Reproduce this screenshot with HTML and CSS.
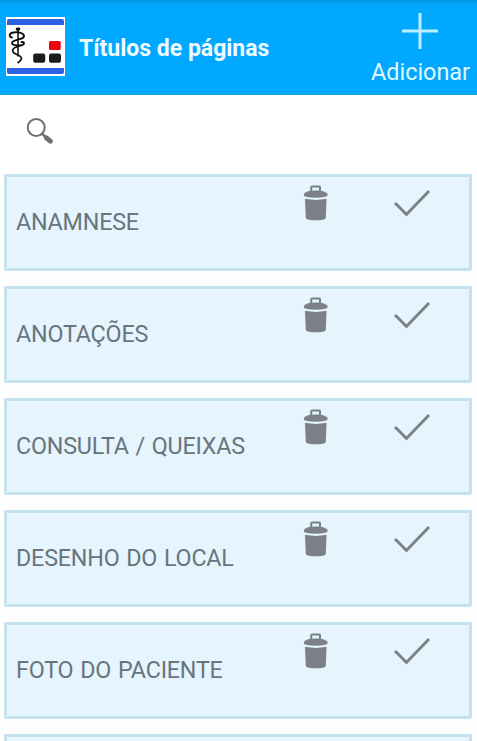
FILE: index.html
```html
<!DOCTYPE html>
<html lang="pt-BR">
<head>
<meta charset="utf-8">
<title>Títulos de páginas</title>
<link rel="stylesheet" href="styles.css">
</head>
<body>
<svg class="symbols" aria-hidden="true">
  <symbol id="trash" viewBox="0 0 26 36">
    <path d="M8.200 6V2.200Q8.200 1.500 9 1.500H16.200Q17 1.500 17 2.200V6" fill="none" stroke="currentColor" stroke-width="2"/>
    <path d="M.8 9.500C1.300 7 6 5.500 12.700 5.500S24.100 7 24.600 9.500Q25 10.900 23.500 11.400Q18 12.800 12.700 12.800T2 11.400Q.4 10.900 .8 9.500Z"/>
    <path d="M2 13.800Q12.700 16 23.500 13.800L22.800 32.500Q22.700 33.800 20.800 34.500Q12.700 36.200 4.800 34.500Q2.900 33.800 2.800 32.500Z"/>
  </symbol>
  <symbol id="check" viewBox="0 0 36 28">
    <path d="M1 13L12.500 24.500L35 1" fill="none" stroke="currentColor" stroke-width="2.900"/>
  </symbol>
</svg>
<header class="bar">
  <svg class="logo" viewBox="0 0 59 59">
    <rect width="59" height="59" fill="#fff"/>
    <path d="M1 8V4Q1 2 3 2H56Q58 2 58 4V8ZM1 51V55Q1 57 3 57H56Q58 57 58 55V51Z" fill="#2c61e6"/>
    <rect x="43" y="24" width="11.700" height="9" rx="1.500" fill="#f00009"/>
    <rect x="27.200" y="36.500" width="12" height="9.300" rx="2" fill="#1c1c1f"/>
    <rect x="43" y="36.500" width="12" height="9.300" rx="2" fill="#1c1c1f"/>
    <g fill="none" stroke="#080808" stroke-linecap="round">
      <path d="M12 12V39" stroke-width="1.500"/>
      <path d="M11.200 12H12.800" stroke-width="3"/>
      <path d="M6 20.500C2.500 20 3 16 7.500 15.500C13 14.500 18.500 16.500 18 19.500C17.500 23 6 22.500 6 26C6 29 18 29.500 18 26.500Q18 25 15.500 25" stroke-width="1.800"/>
      <path d="M15 28.500C9 30 6 31.500 6.800 34.500C7.800 38 16 37.500 15.500 41.500Q15 44 12 45.700" stroke-width="1.600"/>
    </g>
  </svg>
  <h1 class="title">Títulos de páginas</h1>
  <button class="add">
    <svg class="plus" viewBox="0 0 36 36"><path d="M18 0V36M0 18H36"/></svg>
    <span>Adicionar</span>
  </button>
</header>
<div class="search">
  <svg class="lens" viewBox="0 0 28 28">
    <circle cx="10.200" cy="9.500" r="8.500" fill="none" stroke="currentColor" stroke-width="2"/>
    <path d="M16 15.500L20 19.500" stroke="currentColor" stroke-width="2.500"/>
    <path d="M20.300 19.800L24.400 23.200" stroke="currentColor" stroke-width="5" stroke-linecap="round"/>
  </svg>
</div>
<main class="list">
  <section class="card"><span class="name">ANAMNESE</span><svg class="trash"><use href="#trash"/></svg><svg class="check"><use href="#check"/></svg></section>
  <section class="card"><span class="name">ANOTAÇÕES</span><svg class="trash"><use href="#trash"/></svg><svg class="check"><use href="#check"/></svg></section>
  <section class="card"><span class="name">CONSULTA / QUEIXAS</span><svg class="trash"><use href="#trash"/></svg><svg class="check"><use href="#check"/></svg></section>
  <section class="card"><span class="name">DESENHO DO LOCAL</span><svg class="trash"><use href="#trash"/></svg><svg class="check"><use href="#check"/></svg></section>
  <section class="card"><span class="name">FOTO DO PACIENTE</span><svg class="trash"><use href="#trash"/></svg><svg class="check"><use href="#check"/></svg></section>
  <section class="card card-cut"></section>
</main>
</body>
</html>
```
FILE: styles.css
```css
* { box-sizing: border-box; }
body {
  margin: 0;
  height: 741px;
  overflow: hidden;
  background: #fdfffe;
  font-family: Roboto, "Liberation Sans", sans-serif;
}
svg { display: block; flex: none; }
.symbols { display: none; }
.bar {
  display: flex;
  height: 95px;
  padding: 0 7px 0 6px;
  background: linear-gradient(#0494df 0, #00a6fb 4px, #00a8ff 6px, #00a8ff 93px, #109fe8 95px);
}
.logo { width: 59px; height: 59px; margin-top: 17px; }
.title {
  margin: 34px 0 0 14px;
  font-size: 23px;
  line-height: 30px;
  font-weight: 700;
  color: #effcff;
  white-space: nowrap;
}
.add {
  display: flex;
  flex-direction: column;
  align-items: center;
  margin-left: auto;
  padding: 13px 0 0;
  border: 0;
  background: none;
  font: 400 23.4px/30px Roboto, "Liberation Sans", sans-serif;
  color: #e2f8ff;
}
.plus { width: 36px; height: 36px; margin-right: 1px; fill: none; stroke: #b9efff; stroke-width: 3; }
.add span { margin-top: 8px; }
.search { height: 79px; padding: 23px 0 0 26px; background: #fff; color: #707070; }
.lens { width: 28px; height: 28px; }
.list {
  display: flex;
  flex-direction: column;
  gap: 15px;
  padding: 0 5px 0 4px;
}
.card {
  display: flex;
  flex: none;
  height: 97px;
  padding-left: 9px;
  border: 3px solid #c4e3ef;
  border-radius: 2px;
  background: #e5f4fd;
  color: #7b8187;
}
.card-cut { height: 7px; border-bottom: 0; border-radius: 2px 2px 0 0; }
.name {
  width: 287px;
  padding-top: 30px;
  font-size: 23.3px;
  line-height: 30px;
  letter-spacing: -0.2px;
  word-spacing: 1.2px;
  color: #68757c;
  white-space: nowrap;
}
.trash { width: 26px; height: 36px; margin-top: 8px; fill: currentColor; }
.check { width: 36px; height: 28px; margin: 13px 0 0 65px; }
```
